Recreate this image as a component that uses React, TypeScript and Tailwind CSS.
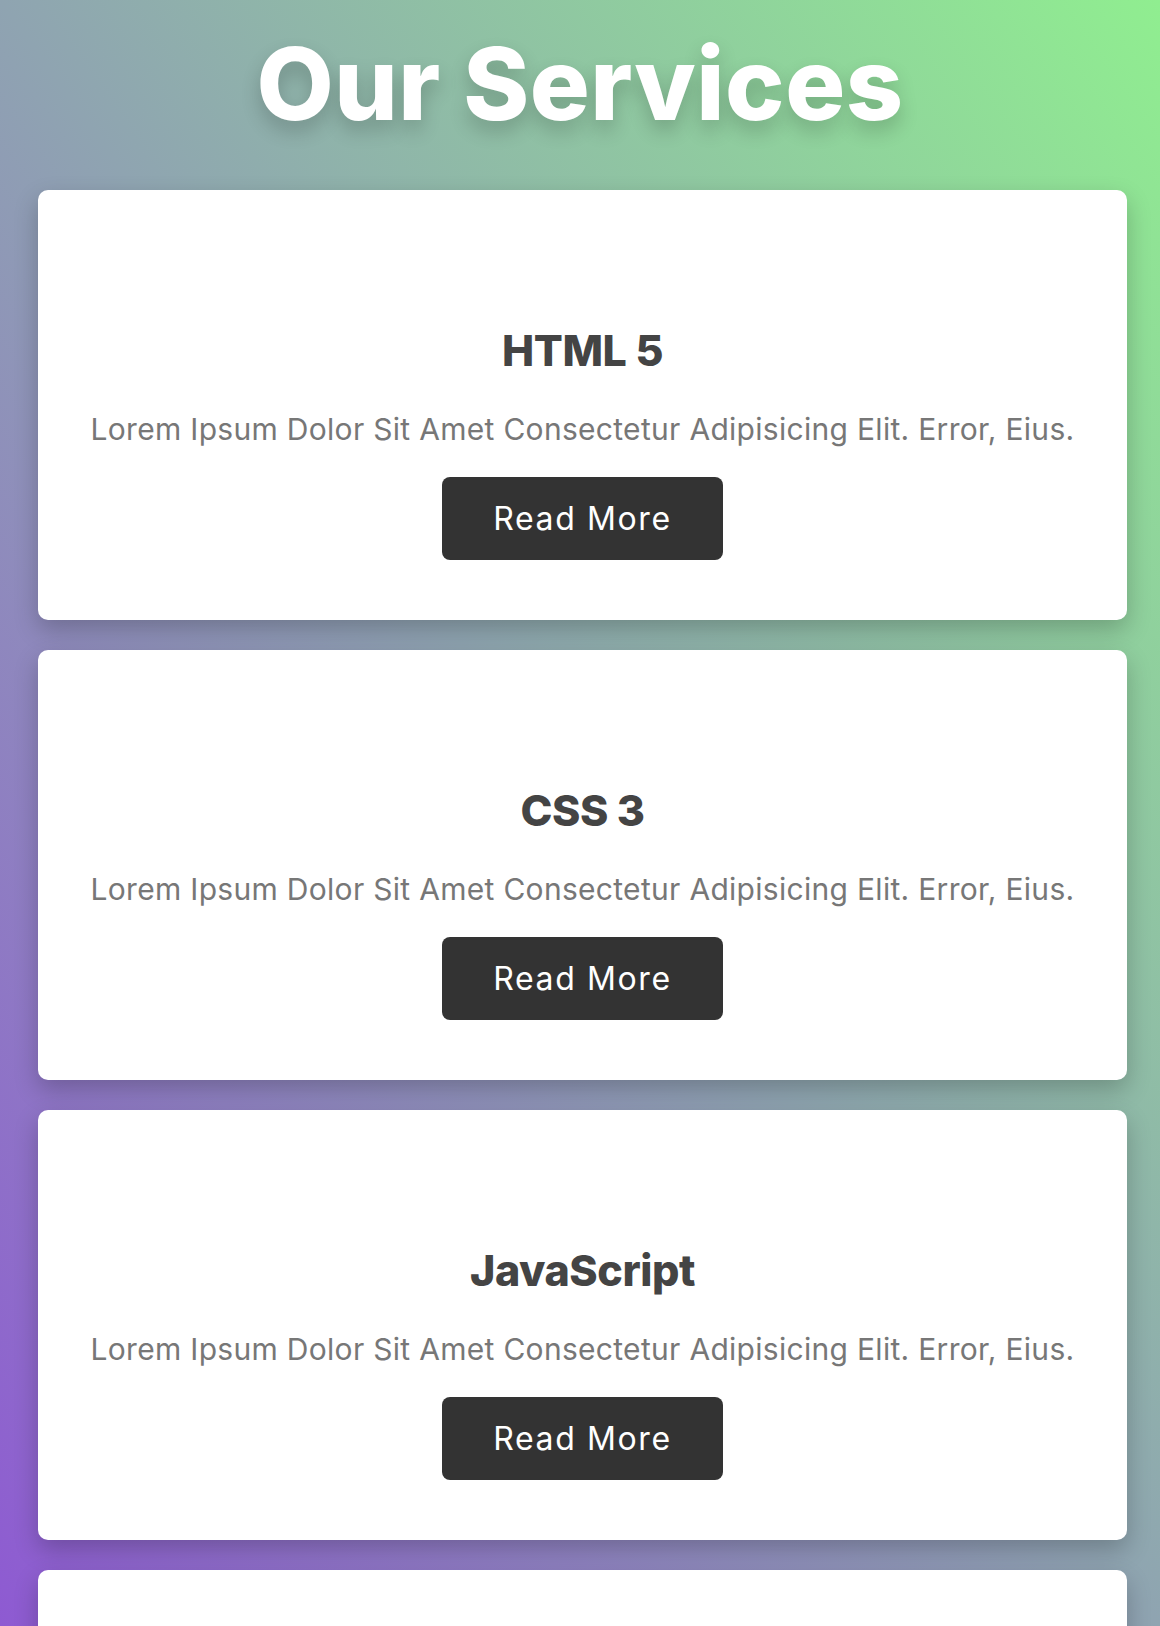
const services = ["HTML 5", "CSS 3", "JavaScript", "React"];

function ServiceCard({ title }: { title: string }) {
  return (
    <article className="flex h-[430px] w-[1089px] flex-col items-center rounded-[10px] bg-white pt-[132px] text-center shadow-[0_10px_24px_rgba(0,0,0,0.22)]">
      <h3 className="text-[43px] font-extrabold leading-[56px] tracking-[-0.01em] text-[#444]">{title}</h3>
      <p className="mt-[31px] text-[30px] leading-[40px] tracking-[0.01em] text-[#777]">
        Lorem Ipsum Dolor Sit Amet Consectetur Adipisicing Elit. Error, Eius.
      </p>
      <button className="mt-[28px] flex h-[83px] w-[281px] items-center justify-center rounded-[8px] bg-[#333] text-[32px] tracking-[0.05em] text-white">
        Read More
      </button>
    </article>
  );
}

export default function App() {
  return (
    <div className="min-h-screen bg-[linear-gradient(to_top_right,#8e5ad2,#90ee90)] bg-fixed pb-10 font-['Inter',sans-serif]">
      <h1 className="pt-[24px] text-center text-[100px] font-extrabold leading-[120px] tracking-[0.005em] text-white [text-shadow:0_10px_20px_rgba(0,0,0,0.2)]">
        Our Services
      </h1>
      <div className="ml-[38px] mt-[46px] flex flex-col gap-[30px]">
        {services.map((s) => (
          <ServiceCard key={s} title={s} />
        ))}
      </div>
    </div>
  );
}
